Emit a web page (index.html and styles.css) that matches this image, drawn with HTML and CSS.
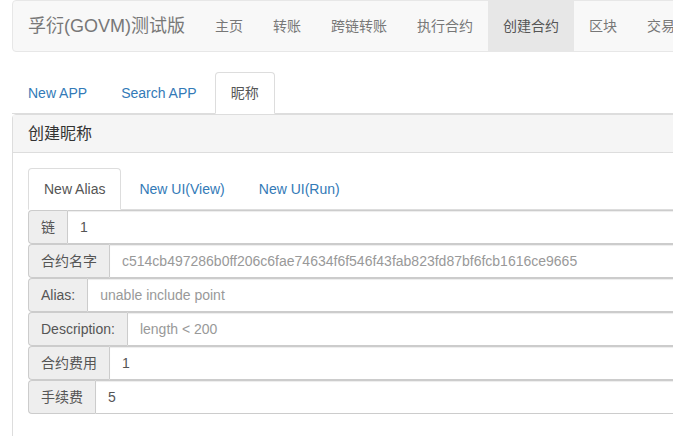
FILE: index.html
```html
<!DOCTYPE html>
<html>
<head>
<meta charset="utf-8">
<title>创建合约</title>
<link rel="stylesheet" href="styles.css">
</head>
<body>
<div class="page">
	<nav class="navbar">
		<a class="brand" href="#">孚衍(GOVM)测试版</a>
		<ul class="menu">
			<li><a href="#">主页</a></li>
			<li><a href="#">转账</a></li>
			<li><a href="#">跨链转账</a></li>
			<li><a href="#">执行合约</a></li>
			<li class="active"><a href="#">创建合约</a></li>
			<li><a href="#">区块</a></li>
			<li><a href="#">交易</a></li>
		</ul>
	</nav>

	<ul class="tabs">
		<li><a href="#">New APP</a></li>
		<li><a href="#">Search APP</a></li>
		<li class="active"><a href="#">昵称</a></li>
	</ul>

	<div class="panel">
		<div class="panel-heading">创建昵称</div>
		<div class="panel-body">
			<ul class="tabs">
				<li class="active"><a href="#">New Alias</a></li>
				<li><a href="#">New UI(View)</a></li>
				<li><a href="#">New UI(Run)</a></li>
			</ul>
			<div class="field">
				<span class="addon">链</span>
				<input class="input" value="1">
			</div>
			<div class="field">
				<span class="addon">合约名字</span>
				<input class="input" placeholder="c514cb497286b0ff206c6fae74634f6f546f43fab823fd87bf6fcb1616ce9665">
			</div>
			<div class="field">
				<span class="addon">Alias:</span>
				<input class="input" placeholder="unable include point">
			</div>
			<div class="field">
				<span class="addon">Description:</span>
				<input class="input" placeholder="length &lt; 200">
			</div>
			<div class="field">
				<span class="addon">合约费用</span>
				<input class="input" value="1">
			</div>
			<div class="field">
				<span class="addon">手续费</span>
				<input class="input" value="5">
			</div>
		</div>
	</div>
</div>
</body>
</html>
```
FILE: styles.css
```css
html, body {
  margin: 0;
  overflow: hidden;
}

body {
  font-family: "Liberation Sans", "Noto Sans CJK SC", sans-serif;
  font-size: 14px;
  line-height: 1.42857;
  color: #333;
  background: #fff;
}

a {
  text-decoration: none;
  color: #337ab7;
}

ul {
  list-style: none;
  margin: 0;
  padding: 0;
}

.page {
  width: 1100px;
  padding: 0 12px;
}

/* top bar */
.navbar {
  display: flex;
  height: 50px;
  background-color: #f8f8f8;
  border: 1px solid #e7e7e7;
  border-radius: 4px;
  margin-bottom: 20px;
}

.brand {
  padding: 15px;
  font-size: 18px;
  line-height: 20px;
  color: #777;
}

.menu {
  display: flex;
}

.menu a {
  display: block;
  padding: 15px;
  line-height: 20px;
  color: #777;
}

.menu .active a {
  background-color: #e7e7e7;
  color: #555;
}

/* tabs */
.tabs {
  display: flex;
  border-bottom: 1px solid #ddd;
}

.tabs li {
  margin-bottom: -1px;
  margin-right: 2px;
}

.tabs a {
  display: block;
  padding: 10px 15px;
  line-height: 20px;
  border: 1px solid transparent;
  border-radius: 4px 4px 0 0;
}

.tabs .active a {
  color: #555;
  background-color: #fff;
  border-color: #ddd #ddd transparent;
}

/* panel */
.panel {
  border: 1px solid #ddd;
  border-radius: 4px;
  margin-bottom: 20px;
}

.panel-heading {
  padding: 10px 15px;
  font-size: 16px;
  line-height: 17px;
  color: #333;
  background-color: #f5f5f5;
  border-bottom: 1px solid #ddd;
}

.panel-body {
  padding: 15px 15px 40px;
}

/* input rows */
.field {
  display: flex;
  height: 34px;
}

.addon {
  padding: 6px 12px;
  line-height: 20px;
  color: #555;
  background-color: #eee;
  border: 1px solid #ccc;
  border-right: 0;
  border-radius: 4px 0 0 4px;
  white-space: nowrap;
}

.input {
  flex: 1;
  min-width: 0;
  height: 34px;
  box-sizing: border-box;
  padding: 6px 12px;
  font: inherit;
  line-height: 20px;
  color: #555;
  border: 1px solid #ccc;
  border-radius: 0 4px 4px 0;
  box-shadow: inset 0 1px 1px rgba(0, 0, 0, .075);
}

.input::placeholder {
  color: #999;
}
```
